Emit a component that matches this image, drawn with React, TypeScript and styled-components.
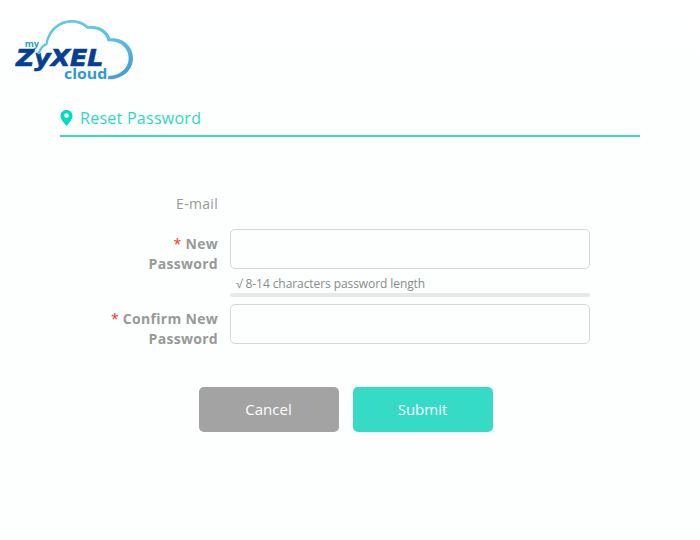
import React from "react";
import styled, { createGlobalStyle } from "styled-components";

const GlobalStyle = createGlobalStyle`
  * { box-sizing: border-box; }
  body {
    margin: 0;
    background: #fdfffe;
    font-family: "Open Sans", "Noto Sans", sans-serif;
    color: #999;
  }
`;

const Page = styled.div`
  width: 700px;
  height: 540px;
  overflow: hidden;
  background: linear-gradient(#ffffff, #fcfffe 100px);
`;

const Header = styled.header`
  height: 101px;
  padding-top: 10px;
`;

const LogoSvg = styled.svg`
  display: block;
  width: 150px;
  height: 80px;
`;

const TitleBar = styled.div`
  display: flex;
  align-items: center;
  height: 36px;
  margin: 0 60px;
  padding-bottom: 1px;
  border-bottom: 2px solid #35d9c4;
`;

const Pin = styled.svg`
  width: 13px;
  height: 16px;
  margin-right: 7px;
`;

const Title = styled.h1`
  margin: 0;
  font-size: 16px;
  line-height: 22px;
  font-weight: 400;
  letter-spacing: 0.27px;
  color: #2fd8c3;
`;

const Form = styled.form`
  padding-top: 47px;
`;

const Row = styled.div<{ $height: number }>`
  display: grid;
  grid-template-columns: 112px 360px;
  column-gap: 12px;
  height: ${(p) => p.$height}px;
  margin-left: 106px;
`;

const Label = styled.label`
  padding-top: 5px;
  font-size: 14px;
  line-height: 20px;
  font-weight: 700;
  letter-spacing: 0.3px;
  text-align: right;
`;

const StaticLabel = styled.span`
  padding-top: 10px;
  font-size: 14px;
  line-height: 20px;
  letter-spacing: 0.3px;
  text-align: right;
`;

const Star = styled.span`
  font-weight: 400;
  color: #ff2a22;
`;

const Input = styled.input`
  display: block;
  width: 360px;
  height: 40px;
  border: 1px solid #d6d8d7;
  border-radius: 5px;
  background: #fdfffe;
  outline: none;
`;

const Hint = styled.div`
  height: 24px;
  padding: 7px 0 0 6px;
  font-size: 12px;
  line-height: 16px;
  letter-spacing: -0.08px;
  color: #8a8a8a;
`;

const Meter = styled.div`
  height: 4px;
  border-radius: 2px;
  background: #e8e8e8;
`;

const Actions = styled.div`
  display: flex;
  gap: 14px;
  margin: 8px 0 0 199px;
`;

const Button = styled.button<{ $primary?: boolean }>`
  width: 140px;
  height: 45px;
  padding: 0 1px 1px 0;
  border: 0;
  border-radius: 5px;
  font: 500 15px "Open Sans", sans-serif;
  color: #fff;
  background: ${(p) => (p.$primary ? "#35dbc5" : "#a3a3a3")};
`;

function Logo() {
  return (
    <LogoSvg viewBox="0 0 450 240" role="img" aria-label="myZyXEL cloud">
      <defs>
        <linearGradient id="cloud" x1="0" y1="0" x2="0.3" y2="1">
          <stop offset="0" stopColor="#67c8ef" />
          <stop offset="0.5" stopColor="#5cc1ea" />
          <stop offset="1" stopColor="#4a9fd6" />
        </linearGradient>
      </defs>
      <g fontFamily="'Open Sans', sans-serif" fontWeight="700" fill="#2e9ad3">
        <text x="74" y="111" fontSize="27" textLength="43" lengthAdjust="spacingAndGlyphs">my</text>
        <text x="192" y="208" fontSize="45" textLength="130" lengthAdjust="spacingAndGlyphs">cloud</text>
      </g>
      <text
        x="48"
        y="168"
        fontFamily="'DejaVu Sans', sans-serif"
        fontSize="67"
        fontWeight="700"
        fontStyle="italic"
        fill="#063f91"
        stroke="#063f91"
        strokeWidth="2"
        textLength="262"
        lengthAdjust="spacingAndGlyphs"
      >
        ZyXEL
      </text>
      <path
        fill="url(#cloud)"
        d="M112 133 C116 118 124 105 137 100 C143 60 175 30 216 30 C237 30 253 37 265 49 C294 43 323 59 331 85 C369 82 399 109 399 144 C399 180 369 208 324 208 L325 198 C362 197 386 174 386 145 C386 115 362 92 323 94 C318 69 294 53 262 57 C250 45 236 38 216 38 C180 38 150 62 142 105 C131 109 123 118 119 133 Z"
      />
    </LogoSvg>
  );
}

export default function App() {
  return (
    <>
      <GlobalStyle />
      <Page>
        <Header>
          <Logo />
        </Header>
        <TitleBar>
          <Pin viewBox="0 0 13 16">
            <path
              fill="#00dbc3"
              fillRule="evenodd"
              d="M6.5 0C3 0 .5 2.500.5 5.700c0 3.800 3.400 7 6 10.300 2.600-3.300 6-6.500 6-10.300C12.500 2.500 10 0 6.500 0Zm0 3.300a2.300 2.300 0 1 1 0 4.600 2.300 2.300 0 0 1 0-4.600Z"
            />
          </Pin>
          <Title>Reset Password</Title>
        </TitleBar>
        <Form onSubmit={(e) => e.preventDefault()}>
          <Row $height={45}>
            <StaticLabel>E-mail</StaticLabel>
          </Row>
          <Row $height={75}>
            <Label htmlFor="new-password">
              <Star>*</Star> New Password
            </Label>
            <div>
              <Input id="new-password" type="password" />
              <Hint>√ 8-14 characters password length</Hint>
              <Meter />
            </div>
          </Row>
          <Row $height={75}>
            <Label htmlFor="confirm-password">
              <Star>*</Star> Confirm New Password
            </Label>
            <Input id="confirm-password" type="password" />
          </Row>
          <Actions>
            <Button type="button">Cancel</Button>
            <Button $primary type="submit">Submit</Button>
          </Actions>
        </Form>
      </Page>
    </>
  );
}
